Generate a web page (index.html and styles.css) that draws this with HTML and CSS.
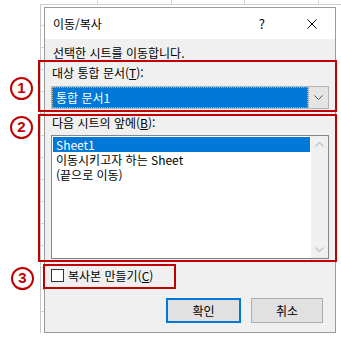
FILE: index.html
```html
<!DOCTYPE html>
<html lang="ko">
    <head>
        <meta charset="UTF-8">
        <meta name="viewport" content="width=device-width, initial-scale=1.0">
        <title>이동/복사</title>
        <link rel="stylesheet" href="styles.css">
    </head>

    <body>
        <div class="sheet">
            <div class="dialog">
                <div class="titlebar">
                    <span class="title">이동/복사</span>
                    <span class="help">?</span>
                    <svg class="close" width="10" height="10" viewBox="0 0 10 10">
                        <path d="M0.5 0.5 L9.5 9.5 M9.5 0.5 L0.5 9.5" stroke="#000" stroke-width="1" fill="none"/>
                    </svg>
                </div>
                <div class="body">
                    <p class="intro">선택한 시트를 이동합니다.</p>

                    <div class="mark mark-book">
                        <div class="field-label">대상 통합 문서(<u>T</u>):</div>
                        <div class="combo">
                            <div class="combo-value">통합 문서1</div>
                            <div class="combo-btn">
                                <svg width="9" height="5" viewBox="0 0 9 5">
                                    <path d="M0.5 0.5 L4.5 4.5 L8.5 0.5" stroke="#555" stroke-width="1" fill="none"/>
                                </svg>
                            </div>
                        </div>
                    </div>

                    <div class="mark mark-list">
                        <div class="field-label">다음 시트의 앞에(<u>B</u>):</div>
                        <div class="listbox">
                            <ul class="items">
                                <li class="selected"><span>Sheet1</span></li>
                                <li><span>이동시키고자 하는 Sheet</span></li>
                                <li><span>(끝으로 이동)</span></li>
                            </ul>
                            <div class="scrollbar">
                                <div class="arrow">
                                    <svg width="9" height="5" viewBox="0 0 9 5">
                                        <path d="M0.5 4.5 L4.5 0.5 L8.5 4.5" stroke="#c2c2c2" stroke-width="1.2" fill="none"/>
                                    </svg>
                                </div>
                                <div class="arrow">
                                    <svg width="9" height="5" viewBox="0 0 9 5">
                                        <path d="M0.5 0.5 L4.5 4.5 L8.5 0.5" stroke="#c2c2c2" stroke-width="1.2" fill="none"/>
                                    </svg>
                                </div>
                            </div>
                        </div>
                    </div>

                    <div class="mark mark-check">
                        <span class="checkbox"></span>
                        <span>복사본 만들기(<u>C</u>)</span>
                    </div>

                    <div class="buttons">
                        <button class="btn btn-default">확인</button>
                        <button class="btn btn-cancel">취소</button>
                    </div>
                </div>
            </div>

            <span class="badge badge-1">1</span>
            <span class="badge badge-2">2</span>
            <span class="badge badge-3">3</span>
        </div>
    </body>
</html>
```

FILE: styles.css
```css
body{
    margin: 0;
    background-color: #fff;
    font-family: "Noto Sans CJK KR", "Noto Sans", sans-serif;
    font-size: 12px;
    color: #000;
}
.sheet{
    position: relative;
    width: 341px;
    height: 346px;
    padding: 7px 0 0 44px;
    box-sizing: border-box;
    background-image:
        linear-gradient(#d0d0d0, #d0d0d0),
        linear-gradient(#c6c6c6, #c6c6c6),
        linear-gradient(#d6d6d6, #d6d6d6),
        linear-gradient(#d6d6d6, #d6d6d6),
        linear-gradient(#d6d6d6, #d6d6d6),
        linear-gradient(#d6d6d6, #d6d6d6),
        repeating-linear-gradient(to bottom, transparent 0 21px, #d6d6d6 21px 22px);
    background-position:
        40px 4px,
        40px 4px,
        97px 0,
        171px 0,
        244px 0,
        318px 0,
        41px 4px;
    background-size:
        301px 1px,
        1px 329px,
        1px 5px,
        1px 5px,
        1px 5px,
        1px 5px,
        3px 329px;
    background-repeat: no-repeat;
}
.dialog{
    width: 292px;
    border: 1px solid #9a9a9a;
    box-sizing: border-box;
    background-color: #f0f0f0;
}
.titlebar{
    display: flex;
    align-items: center;
    height: 31px;
    padding-left: 8px;
    background-color: #fff;
}
.title{
    flex: 1;
    font-size: 12px;
}
.help{
    font-size: 13px;
    margin-right: 42px;
}
.close{
    margin-right: 18px;
}
.body{
    padding: 6px 0 9px 8px;
}
.intro{
    margin: 0;
    line-height: 15px;
}
.mark{
    border: 2px solid #c00000;
    box-sizing: border-box;
}
.mark-book{
    width: 299px;
    margin-left: -15px;
    padding: 3px 0 1px 11px;
}
.mark-list{
    width: 299px;
    margin: 2px 0 0 -15px;
    padding: 0 0 1px 11px;
}
.field-label{
    line-height: 15px;
    padding-left: 1px;
}
.mark-list .field-label{
    line-height: 14px;
}
.combo{
    display: flex;
    width: 278px;
    height: 23px;
    margin-top: 6px;
    border: 1px solid #b4b4b4;
    box-sizing: border-box;
    background-color: #fff;
}
.combo-value{
    flex: 1;
    background-color: #0078d7;
    border: 1px dotted #f0a040;
    color: #fff;
    line-height: 19px;
    padding-left: 3px;
}
.combo-btn{
    width: 19px;
    display: flex;
    align-items: center;
    justify-content: center;
    background-color: #e5e5e5;
    border-left: 1px solid #b4b4b4;
}
.listbox{
    display: flex;
    width: 278px;
    height: 124px;
    margin-top: 5px;
    border: 1px solid #828790;
    box-sizing: border-box;
    background-color: #fff;
}
.items{
    flex: 1;
    list-style: none;
    margin: 0;
    padding: 1px;
}
.items li{
    height: 15px;
    padding-left: 3px;
}
.items li span{
    display: inline-block;
    height: 15px;
    line-height: 15px;
    vertical-align: top;
}
.items .selected{
    background-color: #0078d7;
    color: #fff;
}
.scrollbar{
    width: 17px;
    display: flex;
    flex-direction: column;
    justify-content: space-between;
    background-color: #f0f0f0;
}
.arrow{
    height: 17px;
    display: flex;
    align-items: center;
    justify-content: center;
}
.mark-check{
    display: flex;
    align-items: center;
    gap: 4px;
    width: 133px;
    height: 25px;
    margin: 2px 0 0 -10px;
    padding: 0 0 2px 6px;
}
.checkbox{
    width: 13px;
    height: 13px;
    border: 1px solid #333;
    box-sizing: border-box;
    background-color: #fff;
}
.buttons{
    display: flex;
    justify-content: flex-end;
    gap: 10px;
    margin-top: 9px;
    padding-right: 12px;
}
.btn{
    height: 25px;
    padding: 0;
    font-family: inherit;
    font-size: 12px;
    color: #000;
    background-color: #e1e1e1;
    border: 1px solid #adadad;
}
.btn-default{
    width: 75px;
    border: 2px solid #0078d7;
}
.btn-cancel{
    width: 72px;
}
.badge{
    position: absolute;
    left: 10px;
    width: 23px;
    height: 23px;
    border: 2.5px solid #c00000;
    border-radius: 50%;
    box-sizing: border-box;
    color: #c00000;
    font-family: "Liberation Sans", sans-serif;
    font-weight: bold;
    font-size: 15px;
    line-height: 18px;
    text-align: center;
}
.badge-1{
    top: 77px;
}
.badge-2{
    top: 116px;
}
.badge-3{
    top: 267px;
    left: 11px;
}
```
